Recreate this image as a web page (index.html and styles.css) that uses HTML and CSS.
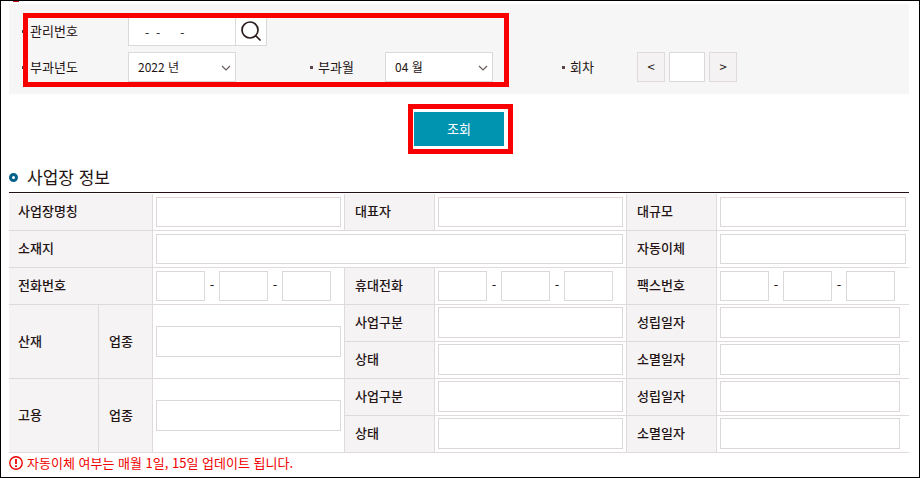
FILE: index.html
```html
<!DOCTYPE html>
<html lang="ko">
<head>
<meta charset="utf-8">
<meta name="viewport" content="width=device-width, initial-scale=1">
<title>사업장 정보</title>
<link rel="stylesheet" href="styles.css">
</head>
<body>
<main class="page">
  <span class="section-mark"></span>
  <form class="search">
    <div class="search-panel">
      <label class="label" for="manage-no">관리번호</label>
      <div class="lookup">
        <input class="field lookup-input" id="manage-no" type="text" value="-  -      -">
        <button class="lookup-button" type="button" aria-label="검색">
          <svg width="22" height="22" viewBox="0 0 22 22" fill="none" stroke="#2b1c1c" stroke-width="1.7">
            <circle cx="10" cy="10" r="8"/>
            <path d="M15.5 15.5L20.5 20.5"/>
          </svg>
        </button>
      </div>
      <label class="label row-start" for="year">부과년도</label>
      <div class="select">
        <select class="field" id="year"><option>2022 년</option></select>
        <svg class="chevron" width="10" height="6" viewBox="0 0 10 6" fill="none" stroke="#6b5c5c" stroke-width="1.2"><path d="M1 1l4 4 4-4"/></svg>
      </div>
      <label class="label" for="month">부과월</label>
      <div class="select">
        <select class="field" id="month"><option>04 월</option></select>
        <svg class="chevron" width="10" height="6" viewBox="0 0 10 6" fill="none" stroke="#6b5c5c" stroke-width="1.2"><path d="M1 1l4 4 4-4"/></svg>
      </div>
      <label class="label" for="round">회차</label>
      <div class="stepper">
        <button class="step" type="button">&lt;</button>
        <input class="field step-input" id="round" type="text">
        <button class="step" type="button">&gt;</button>
      </div>
      <span class="highlight highlight-fields"></span>
    </div>
    <div class="actions">
      <button class="submit" type="button">조회<span class="highlight highlight-submit"></span></button>
    </div>
  </form>

  <section>
    <h2 class="title"><span class="ring"></span>사업장 정보</h2>
    <table class="info">
      <colgroup>
        <col class="col-label"><col class="col-sub"><col>
        <col class="col-label"><col>
        <col class="col-label"><col>
      </colgroup>
      <tbody>
        <tr>
          <th colspan="2"><label for="name">사업장명칭</label></th>
          <td><input class="field" id="name" type="text"></td>
          <th><label for="owner">대표자</label></th>
          <td><input class="field" id="owner" type="text"></td>
          <th><label for="scale">대규모</label></th>
          <td><input class="field" id="scale" type="text"></td>
        </tr>
        <tr>
          <th colspan="2"><label for="address">소재지</label></th>
          <td colspan="3"><input class="field" id="address" type="text"></td>
          <th><label for="auto">자동이체</label></th>
          <td><input class="field" id="auto" type="text"></td>
        </tr>
        <tr>
          <th colspan="2"><label for="tel">전화번호</label></th>
          <td><div class="phone"><input class="field" id="tel" type="text"><span>-</span><input class="field" type="text" aria-label="전화번호"><span>-</span><input class="field" type="text" aria-label="전화번호"></div></td>
          <th><label for="mobile">휴대전화</label></th>
          <td><div class="phone"><input class="field" id="mobile" type="text"><span>-</span><input class="field" type="text" aria-label="휴대전화"><span>-</span><input class="field" type="text" aria-label="휴대전화"></div></td>
          <th><label for="fax">팩스번호</label></th>
          <td><div class="phone"><input class="field" id="fax" type="text"><span>-</span><input class="field" type="text" aria-label="팩스번호"><span>-</span><input class="field" type="text" aria-label="팩스번호"></div></td>
        </tr>
      </tbody>
      <tbody class="insurance">
        <tr>
          <th rowspan="2">산재</th>
          <th rowspan="2"><label for="ind1">업종</label></th>
          <td rowspan="2"><input class="field" id="ind1" type="text"></td>
          <th><label for="type1">사업구분</label></th>
          <td><input class="field" id="type1" type="text"></td>
          <th><label for="start1">성립일자</label></th>
          <td class="date"><input class="field" id="start1" type="text"></td>
        </tr>
        <tr>
          <th class="inner"><label for="state1">상태</label></th>
          <td><input class="field" id="state1" type="text"></td>
          <th><label for="end1">소멸일자</label></th>
          <td class="date"><input class="field" id="end1" type="text"></td>
        </tr>
        <tr>
          <th rowspan="2">고용</th>
          <th rowspan="2"><label for="ind2">업종</label></th>
          <td rowspan="2"><input class="field" id="ind2" type="text"></td>
          <th><label for="type2">사업구분</label></th>
          <td><input class="field" id="type2" type="text"></td>
          <th><label for="start2">성립일자</label></th>
          <td class="date"><input class="field" id="start2" type="text"></td>
        </tr>
        <tr>
          <th class="inner"><label for="state2">상태</label></th>
          <td><input class="field" id="state2" type="text"></td>
          <th><label for="end2">소멸일자</label></th>
          <td class="date"><input class="field" id="end2" type="text"></td>
        </tr>
      </tbody>
    </table>
    <p class="notice">
      <svg width="14" height="14" viewBox="0 0 14 14" fill="none" stroke="#f00000">
        <circle cx="7" cy="7" r="6.2" stroke-width="1.4"/>
        <path d="M7 3v5M7 9.3v1.7" stroke-width="1.8"/>
      </svg>
      자동이체 여부는 매월 1일, 15일 업데이트 됩니다.
    </p>
  </section>
</main>
</body>
</html>
```
FILE: styles.css
```css
* {
  box-sizing: border-box;
}

body {
  margin: 0;
  background: #fff;
  color: #241414;
  font: 13px/20px "Noto Sans CJK KR", sans-serif;
}

.page {
  min-height: 100vh;
  padding: 0 10px 0 8px;
  border: 1px solid #000;
}

.section-mark {
  display: block;
  width: 6px;
  height: 1px;
  margin: 0 0 2px 4px;
  background: #d01010;
}

.field {
  display: block;
  width: 100%;
  height: 30px;
  margin: 0;
  padding: 0 9px;
  border: 1px solid #ddd8d8;
  border-radius: 0;
  background: #fff;
  color: inherit;
  font: inherit;
  font-size: 12px;
  appearance: none;
}

.search-panel {
  position: relative;
  display: grid;
  grid-template-columns: 106px 182fr 75px 177fr 75px 272fr;
  row-gap: 6px;
  align-items: center;
  padding: 12px 0 12px 13px;
  background: #f6f6f6;
}

.label {
  display: flex;
  align-items: center;
  gap: 5px;
}

.label::before {
  content: "";
  width: 3px;
  height: 3px;
  background: #5a4444;
}

.row-start {
  grid-column: 1;
}

.lookup {
  display: flex;
}

.lookup-input {
  width: 108px;
  padding: 2px 0 0 16px;
}

.lookup-button {
  display: grid;
  place-items: center;
  width: 32px;
  height: 30px;
  margin-left: -1px;
  padding: 0;
  border: 1px solid #ddd8d8;
  background: #fff;
}

.select {
  position: relative;
  width: 108px;
}

.chevron {
  position: absolute;
  top: 13px;
  right: 5px;
  pointer-events: none;
}

.stepper {
  display: flex;
  gap: 4px;
}

.step {
  width: 28px;
  height: 30px;
  padding: 0;
  border: 1px solid #e0dada;
  background: #f4f2f3;
  color: inherit;
  font: inherit;
}

.step-input {
  width: 36px;
}

.highlight {
  position: absolute;
  border: 5px solid #f80000;
  pointer-events: none;
}

.highlight-fields {
  top: 9px;
  right: 400px;
  bottom: 7px;
  left: 14px;
}

.highlight-submit {
  top: -8px;
  right: -9px;
  bottom: -8px;
  left: -6px;
}

.actions {
  display: flex;
  justify-content: center;
  padding: 18px 0;
}

.submit {
  position: relative;
  width: 90px;
  height: 34px;
  padding: 0;
  border: 0;
  background: #0094b0;
  color: #fff;
  font: inherit;
}

.title {
  display: flex;
  align-items: center;
  gap: 9px;
  margin: 0;
  padding-bottom: 2px;
  font-size: 17px;
  font-weight: 400;
  line-height: 26px;
}

.ring {
  width: 9px;
  height: 9px;
  border: 3px solid #04618c;
  border-radius: 50%;
}

.info {
  width: 100%;
  padding-top: 1px;
  border-top: 1px solid #241010;
  border-spacing: 0;
  table-layout: fixed;
}

.col-label {
  width: 90px;
}

.col-sub {
  width: 54px;
}

.info th,
.info td {
  border: solid #e0dada;
  border-width: 0 1px 1px 0;
}

.info td {
  padding: 3px;
}

.info td:last-child {
  border-right: 0;
}

.info th {
  padding: 0 0 2px 10px;
  background: #f5f3f4;
  font-weight: 500;
  text-align: left;
}

.info th:first-child:not(.inner) {
  padding-left: 9px;
}

.insurance .field {
  height: 31px;
}

.info .insurance td {
  padding: 2px 3px 3px;
}

.info .insurance .date {
  padding-right: 9px;
}

.phone {
  display: flex;
}

.phone .field {
  width: 49px;
}

.phone span {
  width: 14px;
  line-height: 28px;
  text-align: center;
}

.notice {
  display: flex;
  align-items: center;
  gap: 4px;
  margin: 0;
  color: #f00000;
}
```
